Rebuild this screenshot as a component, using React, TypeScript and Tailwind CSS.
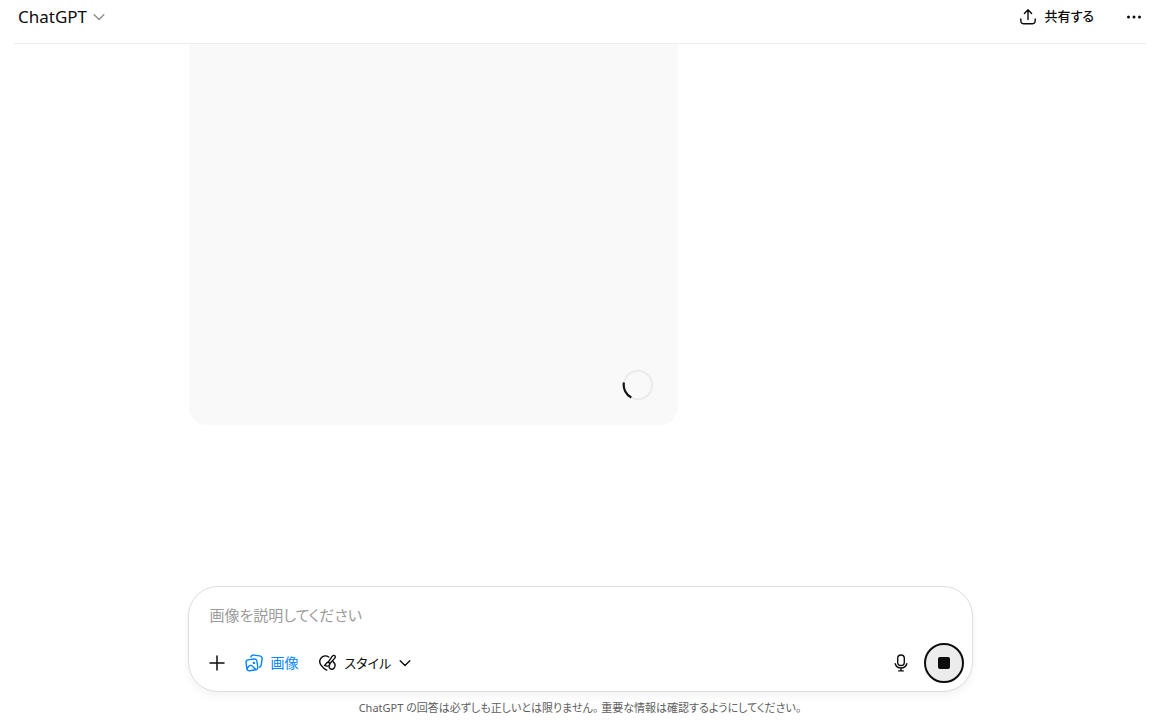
import React from "react";

const stroke = {
  fill: "none",
  stroke: "currentColor",
  strokeLinecap: "round" as const,
  strokeLinejoin: "round" as const,
};

function ChevronIcon({ className }: { className: string }) {
  return (
    <svg viewBox="0 0 12 12" className={className} {...stroke} strokeWidth="1.4" aria-hidden="true">
      <path d="M1.2 3.8 6 8.5 10.8 3.8" />
    </svg>
  );
}

function ShareIcon() {
  return (
    <svg viewBox="0 0 18 18" className="size-[18px]" {...stroke} strokeWidth="1.4" aria-hidden="true">
      <path d="M9 11.5V2M5.4 5.4 9 1.8l3.6 3.6" />
      <path d="M1.8 11v1.8a3 3 0 0 0 3 3h8.4a3 3 0 0 0 3-3V11" />
    </svg>
  );
}

function DotsIcon() {
  return (
    <svg viewBox="0 0 16 16" className="size-4" fill="currentColor" aria-hidden="true">
      <circle cx="2.5" cy="8" r="1.5" />
      <circle cx="8" cy="8" r="1.5" />
      <circle cx="13.5" cy="8" r="1.5" />
    </svg>
  );
}

function PlusIcon() {
  return (
    <svg viewBox="0 0 16 16" className="size-4" {...stroke} strokeWidth="1.5" aria-hidden="true">
      <path d="M8 1v14M1 8h14" />
    </svg>
  );
}

function ImagesIcon() {
  return (
    <svg viewBox="0 0 18 18" className="size-[18px]" {...stroke} strokeWidth="1.4" aria-hidden="true">
      <path d="M3 5.900 9.300 5a2.300 2.300 0 0 1 2.600 2l.9 6.200a2.300 2.300 0 0 1-2 2.600l-6.300.9a2.300 2.300 0 0 1-2.600-2L1 8.500a2.300 2.300 0 0 1 2-2.600Z" />
      <path d="M2 15c1.100-2.500 2.600-3.900 4.100-3.600 1.900.4 2.500 2.700 5 4.200" />
      <path d="M5.900 2.900C6.500 1.500 7.500.9 9 1.100l5.500.8c2 .3 2.900 1.500 2.600 3.300l-.9 5.700c-.2 1.200-.7 1.900-1.500 2.300" />
      <circle cx="8.900" cy="8.900" r="1.200" fill="currentColor" stroke="none" />
    </svg>
  );
}

function StyleIcon() {
  return (
    <svg viewBox="0 0 18 18" className="size-[18px]" {...stroke} strokeWidth="1.4" aria-hidden="true">
      <path d="M9.700 3C7.500 1.400 4.400 1.600 2.500 3.600.5 5.700.4 8.900 2 11.200c1.400 2 3.300 3.800 5.700 4.900" />
      <path d="M9 8.300 13.200 2.400c.8-1.100 1.900-1.300 2.600-.7.800.7.600 1.800-.2 2.700L10.700 9.700" />
      <path d="M9 8.300c1.300.1 2.100 1 1.700 2.200-.6 1.800-3.100 2.100-5.200.9 1.600-.6 1.500-3 3.500-3.100Z" />
      <path d="M14 7.600c1.900 1.400 2.500 4 1.400 6-1.100 2-3.700 2.200-4.800.6-.4-.6-.4-1.100-.2-1.600" />
    </svg>
  );
}

function MicIcon() {
  return (
    <svg viewBox="0 0 14 18" className="h-[18px] w-3.5" {...stroke} strokeWidth="1.400" aria-hidden="true">
      <rect x="3.700" y="1" width="6.600" height="10.500" rx="3.300" />
      <path d="M1.200 9.800c.7 2.600 3 4.200 5.800 4.200s5.100-1.600 5.800-4.200M7 14v2.800M4.700 16.900h4.600" />
    </svg>
  );
}

function Spinner() {
  return (
    <svg viewBox="0 0 32 32" className="size-8" fill="none" role="status" aria-label="生成中">
      <circle cx="16" cy="16" r="14.200" stroke="#ebebeb" strokeWidth="2" />
      <path d="M1.900 13.500A14.200 14.200 0 0 0 9.300 28.500" stroke="#161616" strokeWidth="2.200" />
    </svg>
  );
}

export default function App() {
  return (
    <div className="flex h-screen flex-col overflow-hidden bg-white pr-2.5 font-['Noto_Sans','Noto_Sans_CJK_JP',sans-serif] text-[#0d0d0d] [font-feature-settings:'palt']">
      <header className="mx-3.5 flex h-11 shrink-0 items-center justify-between border-b border-[#ededed] pr-1 pb-2.5 pl-1">
        <button type="button" className="flex items-center gap-1.5 text-[17px] leading-6">
          ChatGPT
          <ChevronIcon className="size-3 text-[#8f8f8f]" />
        </button>
        <div className="flex items-center gap-8">
          <button type="button" className="flex items-center gap-2 text-[13px] font-medium">
            <ShareIcon />
            共有する
          </button>
          <button type="button" aria-label="その他">
            <DotsIcon />
          </button>
        </div>
      </header>

      <main className="mx-auto flex min-h-0 w-full max-w-[785px] flex-1 flex-col">
        <section className="ml-px flex h-[381px] w-[489px] max-w-full items-end justify-end rounded-b-[18px] bg-[#f9f9f9] p-6" aria-label="画像を生成中">
          <Spinner />
        </section>

        <form className="mt-auto flex flex-col rounded-[30px] border border-[#dedede] bg-white pt-4 pr-2 pb-2 pl-5 shadow-[0_4px_8px_rgba(0,0,0,0.05)]">
          <input
            type="text"
            aria-label="画像を説明してください"
            placeholder="画像を説明してください"
            className="h-6 w-full bg-transparent pl-px text-[15px] outline-none placeholder:text-[#9b9b9b]"
          />
          <div className="mt-4 flex items-center justify-between">
            <div className="flex items-center text-sm">
              <button type="button" aria-label="追加" className="mr-5">
                <PlusIcon />
              </button>
              <button type="button" className="mr-5 flex items-center gap-2 text-[#0285ff]">
                <ImagesIcon />
                画像
              </button>
              <button type="button" className="flex items-center gap-2 text-[13px]">
                <StyleIcon />
                スタイル
                <ChevronIcon className="size-3" />
              </button>
            </div>
            <div className="flex items-center gap-4">
              <button type="button" aria-label="音声入力">
                <MicIcon />
              </button>
              <button type="button" aria-label="停止" className="flex size-10 items-center justify-center rounded-full border-2 border-[#0d0d0d] bg-[#ececec]">
                <span className="size-3 rounded-[2px] bg-[#0d0d0d]" />
              </button>
            </div>
          </div>
        </form>
      </main>

      <footer className="shrink-0 pt-2 pb-3 text-center text-[11px] leading-4 text-[#5d5d5d]">
        ChatGPT の回答は必ずしも正しいとは限りません。 重要な情報は確認するようにしてください。
      </footer>
    </div>
  );
}
